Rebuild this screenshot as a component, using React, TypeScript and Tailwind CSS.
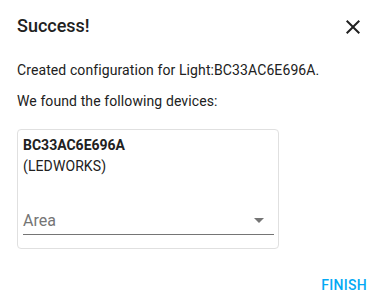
import React from 'react';

export default function App() {
  return (
    <div className="w-[390px] h-[304px] bg-white text-[#212121] font-['Roboto',sans-serif] flex flex-col">
      {/* Header */}
      <div className="flex items-start justify-between pl-[17px] pr-[25px] pt-[14px]">
        <h2 className="text-[18px] leading-[24px] font-medium">Success!</h2>
        <svg viewBox="0 0 24 24" className="w-6 h-6 mt-px fill-[#212121]">
          <path d="M19 6.41L17.59 5 12 10.59 6.41 5 5 6.41 10.59 12 5 17.59 6.41 19 12 13.41 17.59 19 19 17.59 13.41 12z" />
        </svg>
      </div>

      {/* Content */}
      <div className="px-[17px] pt-[21px] text-[14px] leading-[20px] tracking-[0.1px]">
        <p>Created configuration for Light:BC33AC6E696A.</p>
        <p className="mt-[11px]">We found the following devices:</p>

        <div className="mt-[18px] w-[262px] h-[120px] border border-[#e0e0e0] rounded-[4px] pl-[5px] pr-[4px] pt-[5px]">
          <div className="font-bold tracking-normal">BC33AC6E696A</div>
          <div className="mt-px">(LEDWORKS)</div>

          <div className="mt-[33px] h-[26px] border-b border-[#757575] flex items-start justify-between">
            <span className="text-[16px] leading-[20px] text-[#757575] mt-[2px] tracking-normal">Area</span>
            <svg viewBox="0 0 10 5" className="w-[10px] h-[5px] mt-[9px] mr-[10px] fill-[#757575]">
              <path d="M0 0l5 5 5-5z" />
            </svg>
          </div>
        </div>
      </div>

      {/* Actions */}
      <div className="flex justify-end pr-[23px] mt-[26px]">
        <button className="text-[14px] leading-[20px] font-medium text-[#03a9f4] tracking-[0.3px]">
          FINISH
        </button>
      </div>
    </div>
  );
}
